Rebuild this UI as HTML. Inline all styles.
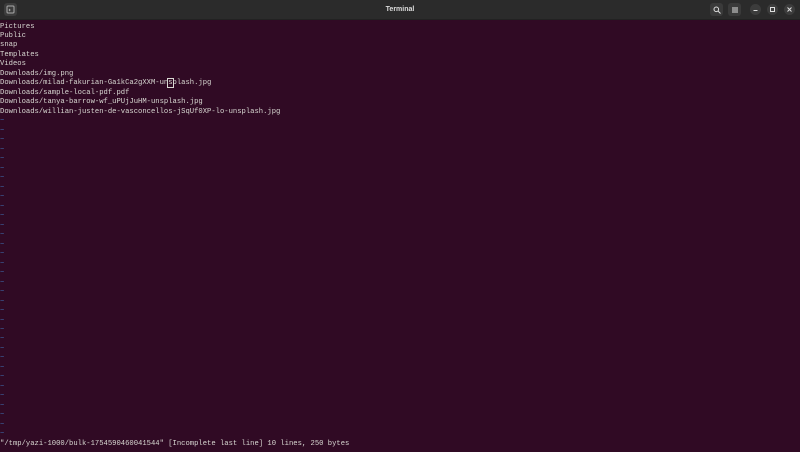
<!DOCTYPE html>
<html><head><style>
html,body{margin:0;padding:0;width:800px;height:452px;overflow:hidden;background:#300a24}
.hd{position:absolute;left:0;top:0;width:800px;height:19px;background:#2b2b2b;border-bottom:1px solid #222}
.t{position:absolute;left:0;top:0;width:800px;text-align:center;font:bold 7px/19px "Liberation Sans",sans-serif;color:#dcdcdc}
.b{position:absolute;top:3px;width:13px;height:13px;border-radius:3px;background:#3a3a3a}
.c{position:absolute;top:4px;width:11px;height:11px;border-radius:50%;background:#3c3c3c}
pre{position:absolute;left:0;top:22.5px;margin:0;font:7.2px/9.48px "Liberation Mono",monospace;color:#d8d8d2}
.tl{color:#3f6fb0}
.cur{outline:1px solid #d8d8d2}
</style></head><body>
<div class="hd">
<div class="b" style="left:4px;background:#3d3d3d"></div>
<svg style="position:absolute;left:6px;top:5px" width="9" height="9" viewBox="0 0 9 9"><rect x="1" y="1" width="7" height="7" rx="1" fill="none" stroke="#aaa" stroke-width="1"/><path d="M3 4l1 1-1 1" stroke="#aaa" fill="none"/></svg>
<div class="t">Terminal</div>
<div class="b" style="left:710px"></div>
<svg style="position:absolute;left:713px;top:6px" width="8" height="8"><circle cx="3.3" cy="3.3" r="2.3" stroke="#ddd" fill="none"/><path d="M5 5l2.5 2.5" stroke="#ddd"/></svg>
<div class="b" style="left:728px"></div>
<svg style="position:absolute;left:731px;top:6px" width="8" height="8"><path d="M1 2h6M1 4h6M1 6h6" stroke="#ddd"/></svg>
<div class="c" style="left:750px"></div><svg style="position:absolute;left:750px;top:4px" width="11" height="11"><path d="M3.5 6.5h4" stroke="#ddd"/></svg>
<div class="c" style="left:767px"></div><svg style="position:absolute;left:767px;top:4px" width="11" height="11"><rect x="3.5" y="3.5" width="4" height="4" stroke="#ddd" fill="none"/></svg>
<div class="c" style="left:784px"></div><svg style="position:absolute;left:784px;top:4px" width="11" height="11"><path d="M3.5 3.5l4 4M7.5 3.5l-4 4" stroke="#ddd"/></svg>
</div>
<pre>Pictures
Public
snap
Templates
Videos
Downloads/img.png
Downloads/milad-fakurian-Ga1kCa2gXXM-un<span class="cur">s</span>plash.jpg
Downloads/sample-local-pdf.pdf
Downloads/tanya-barrow-wf_uPUjJuHM-unsplash.jpg
Downloads/willian-justen-de-vasconcellos-jSqUf0XP-lo-unsplash.jpg
<span class="tl">~
~
~
~
~
~
~
~
~
~
~
~
~
~
~
~
~
~
~
~
~
~
~
~
~
~
~
~
~
~
~
~
~
~</span>
"/tmp/yazi-1000/bulk-1754590460041544" [Incomplete last line] 10 lines, 250 bytes</pre>
</body></html>
